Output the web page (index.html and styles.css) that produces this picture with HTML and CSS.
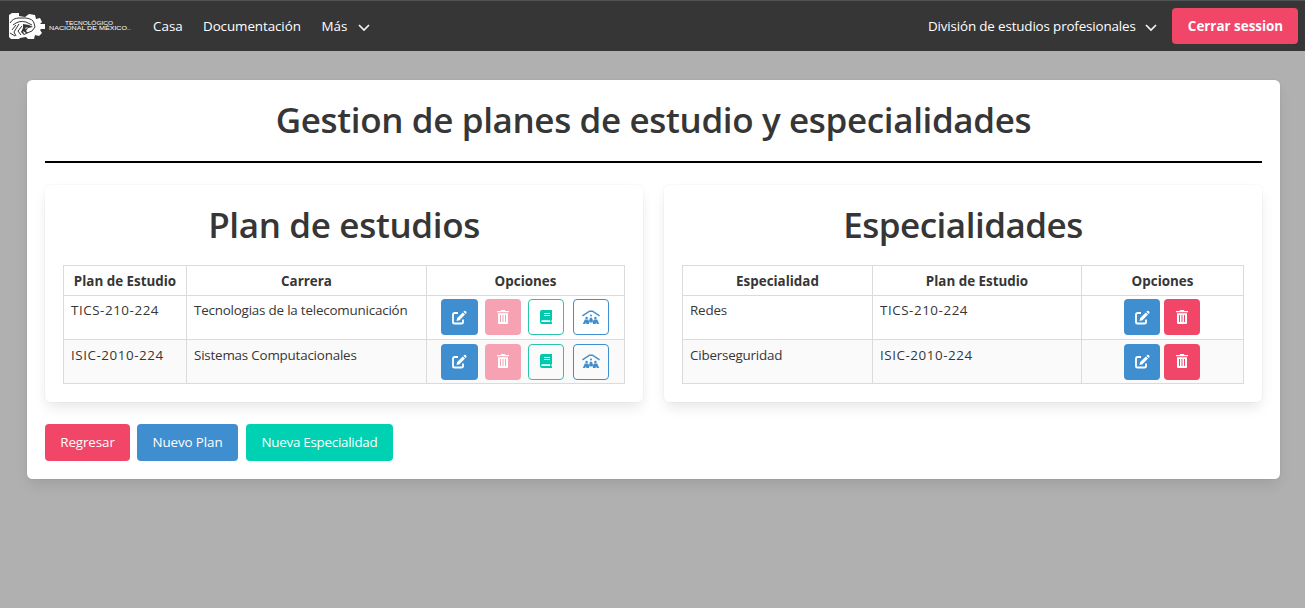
FILE: index.html
```html
<!DOCTYPE html>
<html lang="es">
<head>
<meta charset="utf-8">
<title>Gestion de planes de estudio y especialidades</title>
<link rel="stylesheet" href="styles.css">
</head>
<body>
<svg width="0" height="0" class="defs">
  <symbol id="edit" viewBox="0 0 15 15"><path d="M6 3H2.600Q1 3 1 4.400V12.400Q1 13.500 2.400 13.500H9.600Q11 13.500 11 12.400V9.500" fill="none" stroke="currentColor" stroke-width="1.800"/><path d="M4.500 11l.7-3L10.800 2.400l2.200 2.200L7.500 10.300zM11.400 1.800l.8-.8q.7-.6 1.400.1l.7.700q.6.700 0 1.400l-.7.800z" fill="currentColor"/></symbol>
  <symbol id="trash" viewBox="0 0 12 14"><path fill="currentColor" fill-rule="evenodd" d="M0 1h3.500L4.300 0h3.400l.8 1H12v1.200H0zM1 3.200h10V13q0 1-1 1H2q-1 0-1-1zM3 5v7h1V5zM5.500 5v7h1V5zM8 5v7h1V5z"/></symbol>
  <symbol id="book" viewBox="0 0 12 14"><path fill="currentColor" fill-rule="evenodd" d="M2 0h10v10.300h-.6v2h.6V14H2q-2 0-2-2V2Q0 0 2 0zM4 3v1h6V3zM4 5v1h6V5zM2.200 10.300q-.9.100-.9.900t.9.900h8v-1.800z"/></symbol>
  <symbol id="roof" viewBox="0 0 18 15"><path fill="none" stroke="currentColor" stroke-width="1.500" d="M.4 5.800L7.500 1.200h3L17.600 5.800"/><g fill="currentColor"><circle cx="9" cy="5.500" r="1"/><circle cx="4.600" cy="8" r="1.200"/><circle cx="13.400" cy="8" r="1.200"/><path d="M.8 14l2-4.500h3L7 11l1-3.200h2l1 3.200 1.200-1.500h3l2 4.500h-2.400l-.6-1.600-.7 1.600H11l-.6-2.400L9 13l-1.400-1.400L7 14H4.500l-.7-1.600-.6 1.600z"/></g></symbol>
</svg>
<nav class="navbar">
  <svg class="logo" viewBox="0 0 124 28" width="124" height="28">
    <path fill="#fff" d="M1 3l3-2h7v3l6 1 4-3 6 1 1 4 4-1 2 4-2 2h5v5h-4l-1 1 2 3-3 3-4-1-1 4h-6l-2-2-6 1-1 1H3l-2-2z"/>
    <path fill="none" stroke="#363636" stroke-width="1" d="M2 11q3-5 9-5h7q7 1 8 5l1 4-3 4-5 2M5 13q6-5 13-3l6 3M8 13l-4 5M11 12l-5 8 2 4M14 14l-4 5 3 4M2 21l5 3"/>
    <path fill="#363636" d="M15 12l6 1 4 2-5 1-2 3 2 2-4 2-3-3 2-4z"/>
    <path fill="#fff" d="M17 16l3-1-2 2zM15 19l3 2-2 1z"/>
    <text x="57" y="12.600" class="logo-text" textLength="48" lengthAdjust="spacingAndGlyphs">TECNOLÓGICO</text>
    <text x="41" y="17.600" class="logo-text" textLength="82" lengthAdjust="spacingAndGlyphs">NACIONAL DE MÉXICO..</text>
  </svg>
  <a class="casa">Casa</a><a class="docs">Documentación</a><a class="more">Más</a>
  <svg class="chevron" viewBox="0 0 12 8" width="12" height="8"><path d="M1 1l5 5 5-5"/></svg>
  <a class="division">División de estudios profesionales</a>
  <svg class="chevron" viewBox="0 0 12 8" width="12" height="8"><path d="M1 1l5 5 5-5"/></svg>
  <a class="button danger logout"><span>Cerrar session</span></a>
</nav>
<main class="box main">
  <h1 class="title-main">Gestion de planes de estudio y especialidades</h1>
  <hr>
  <div class="columns">
    <section class="box card">
      <h2 class="title-plan">Plan de estudios</h2>
      <table>
        <colgroup><col class="w123"><col class="w240"><col></colgroup>
        <tr><th>Plan de Estudio</th><th>Carrera</th><th>Opciones</th></tr>
        <tr><td><span class="code">TICS-210-224</span></td><td>Tecnologias de la telecomunicación</td><td class="opts"><div class="actions four">
          <a class="icon info wide"><svg class="i-edit"><use href="#edit"/></svg></a><a class="icon danger disabled"><svg class="i-small"><use href="#trash"/></svg></a><a class="icon book"><svg class="i-small"><use href="#book"/></svg></a><a class="icon roof"><svg class="i-roof"><use href="#roof"/></svg></a></div></td></tr>
        <tr><td><span class="code">ISIC-2010-224</span></td><td>Sistemas Computacionales</td><td class="opts"><div class="actions four">
          <a class="icon info wide"><svg class="i-edit"><use href="#edit"/></svg></a><a class="icon danger disabled"><svg class="i-small"><use href="#trash"/></svg></a><a class="icon book"><svg class="i-small"><use href="#book"/></svg></a><a class="icon roof"><svg class="i-roof"><use href="#roof"/></svg></a></div></td></tr>
      </table>
    </section>
    <section class="box card">
      <h2 class="title-esp">Especialidades</h2>
      <table>
        <colgroup><col class="w190"><col class="w209"><col></colgroup>
        <tr><th>Especialidad</th><th>Plan de Estudio</th><th>Opciones</th></tr>
        <tr><td>Redes</td><td><span class="code">TICS-210-224</span></td><td class="opts"><div class="actions two"><a class="icon info"><svg class="i-edit"><use href="#edit"/></svg></a><a class="icon danger"><svg class="i-small"><use href="#trash"/></svg></a></div></td></tr>
        <tr><td>Ciberseguridad</td><td><span class="code">ISIC-2010-224</span></td><td class="opts"><div class="actions two"><a class="icon info"><svg class="i-edit"><use href="#edit"/></svg></a><a class="icon danger"><svg class="i-small"><use href="#trash"/></svg></a></div></td></tr>
      </table>
    </section>
  </div>
  <div class="buttons"><a class="button danger back">Regresar</a><a class="button info plan">Nuevo Plan</a><a class="button primary esp">Nueva Especialidad</a></div>
</main>
</body>
</html>
```

FILE: styles.css
```css
* { box-sizing: border-box; }
body { margin: 0; height: 608px; overflow: hidden; background: #b0b0b0; font: 13.4px/22px "Open Sans", "Noto Sans", sans-serif; color: #363636; }
.defs { display: block; height: 0; }
.navbar { height: 51px; background: #363636; border-top: 1px solid #505356; display: flex; align-items: center; padding: 0 7px 0 8px; color: #fff; white-space: nowrap; }
.logo-text { font: 5.600px "Liberation Sans", sans-serif; fill: #fff; }
.logo { flex: none; }
.casa { width: 50px; margin-left: 21px; }
.docs { width: 118.500px; letter-spacing: -.08px; }
.more { width: 36px; }
.chevron { flex: none; margin-top: 3px; }
.chevron path { fill: none; stroke: #f2f2f2; stroke-width: 1.700; }
.division { margin-left: auto; width: 217px; letter-spacing: -.15px; }
.button { display: flex; align-items: center; justify-content: center; height: 37px; padding-bottom: 2px; border-radius: 4px; color: #fff; white-space: nowrap; }
.danger { background: #f14668; color: #fff; }
.info { background: #3e8ed0; color: #fff; }
.primary { background: #00d1b2; }
.logout { width: 126px; height: 36px; margin-left: 15px; padding: 0 0 0 1px; font-weight: 700; }
.navbar .logout { margin-top: 0; margin-bottom: 1px; }
.box { background: #fff; border-radius: 5.400px; box-shadow: 0 7px 14px -2px rgba(10,10,10,.1), 0 0 0 1px rgba(10,10,10,.02); }
.main { margin: 29px 25px 0 27px; height: 399px; padding: 18px; }
h1, h2 { margin: 0; font-size: 35px; font-weight: 600; line-height: 44px; text-align: center; white-space: nowrap; letter-spacing: -.36px; }
.title-plan { letter-spacing: -.34px; }
.title-esp { letter-spacing: -.5px; }
hr { margin: 19px 0 22px; height: 2px; border: 0; background: #000; }
.columns { display: grid; grid-template-columns: 1fr 1fr; gap: 21px; }
.card { height: 217px; padding: 18px; }
.card h2 { margin-bottom: 18px; }
table { width: 562px; height: 119px; table-layout: fixed; border-collapse: collapse; }
.w123 { width: 123px; }
.w240 { width: 240px; }
.w190 { width: 190px; }
.w209 { width: 209px; }
th, td { border: 1px solid #dbdbdb; padding: 3px 7px; white-space: nowrap; vertical-align: top; }
th { text-align: center; padding: 4px 0 3px; height: 30px; }
td { letter-spacing: -.2px; }
tr + tr { height: 44px; }
tr:last-child { background: #fafafa; }
tr:last-child td { padding-top: 4px; }
.code { letter-spacing: .55px; }
td.opts { padding: 3px 0 0; }
tr:last-child td.opts { padding-top: 4px; }
.actions { display: flex; }
.four { padding-left: 14px; gap: 7px; }
.two { padding-left: 42px; gap: 4px; }
.icon { display: flex; align-items: center; justify-content: center; width: 36px; height: 36px; border-radius: 4px; }
tr:last-child .icon { padding-bottom: 2px; }
.wide { width: 37px; }
.disabled { background: #f7a2b3; }
.book { color: #00c9ad; border: 1px solid #2bc4ab; }
.roof { color: #3e8ed0; border: 1px solid #3e8ed0; margin-left: 2px; }
.i-edit { width: 15px; height: 15px; }
.i-small { width: 12px; height: 14px; }
.i-roof { width: 18px; height: 15px; }
.buttons { display: flex; gap: 7px; margin-top: 22px; }
.back { width: 85px; letter-spacing: -.1px; }
.plan { width: 101px; letter-spacing: -.1px; }
.esp { width: 147px; margin-left: 1px; letter-spacing: -.27px; }
```
